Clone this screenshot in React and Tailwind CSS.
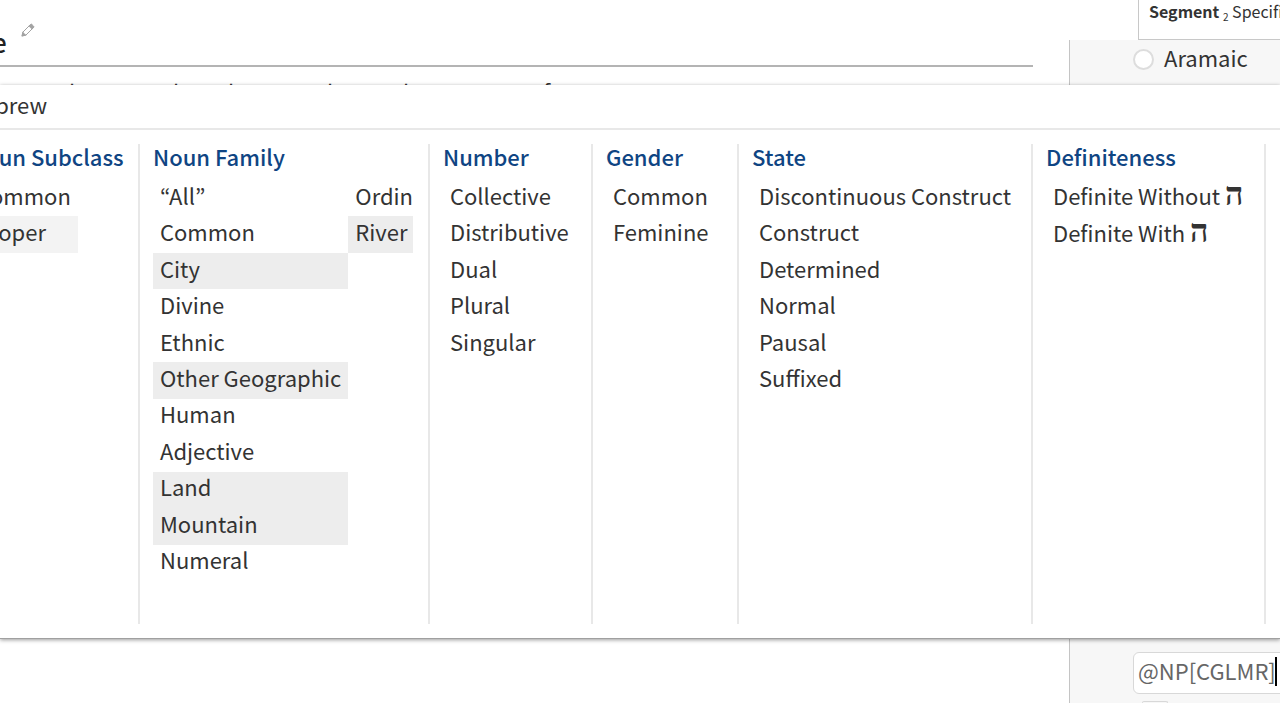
import React, { useState } from 'react';
import clsx from 'clsx';

const COLUMNS = [
    { title: 'Noun Subclass', width: 'w-[184px]', shade: 'bg-[#f3f3f3]', items: ['Common', 'Proper'] },
    {
        title: 'Noun Family',
        width: 'w-[290px]',
        shade: 'bg-[#ededed]',
        items: [
            '“All”', 'Common', 'City', 'Divine', 'Ethnic', 'Other Geographic', 'Human',
            'Adjective', 'Land', 'Mountain', 'Numeral', 'Ordinal', 'River',
        ],
    },
    { title: 'Number', width: 'w-[163px]', items: ['Collective', 'Distributive', 'Dual', 'Plural', 'Singular'] },
    { title: 'Gender', width: 'w-[146px]', items: ['Common', 'Feminine'] },
    {
        title: 'State',
        width: 'w-[294px]',
        items: ['Discontinuous Construct', 'Construct', 'Determined', 'Normal', 'Pausal', 'Suffixed'],
    },
    { title: 'Definiteness', width: 'w-[233px]', items: ['Definite Without ה', 'Definite With ה'] },
];

const INITIAL = [
    'Noun Subclass/Proper',
    'Noun Family/City',
    'Noun Family/Other Geographic',
    'Noun Family/Land',
    'Noun Family/Mountain',
    'Noun Family/River',
];

function ItemLabel({ text }) {
    if (!text.endsWith('ה')) return text;
    return (
        <>
            {text.slice(0, -1)}
            <span lang="he" className="font-['Liberation_Serif',serif] text-[32px] leading-none font-bold">ה</span>
        </>
    );
}

function Column({ column, selected, onToggle }) {
    return (
        <section className={clsx('shrink-0 border-r-2 border-[#e8e8e8] pr-[15px] pl-[13px]', column.width)}>
            <h2 className="h-9 text-[22px] leading-6 font-medium whitespace-nowrap text-[#0f4583]">{column.title}</h2>
            <div className="grid h-[401px] grid-flow-col grid-rows-11 justify-start overflow-hidden">
                {column.items.map((item) => {
                    const key = `${column.title}/${item}`;
                    return (
                        <button
                            key={key}
                            type="button"
                            aria-pressed={selected.includes(key)}
                            onClick={() => onToggle(key)}
                            className={clsx(
                                'flex min-h-0 items-center px-[7px] pb-[7px] text-left whitespace-pre',
                                selected.includes(key) && column.shade
                            )}
                        >
                            <span className="leading-8"><ItemLabel text={item} /></span>
                        </button>
                    );
                })}
            </div>
        </section>
    );
}

function MorphMenu() {
    const [selected, setSelected] = useState(INITIAL);

    const toggle = (key) => {
        setSelected((prev) => (prev.includes(key) ? prev.filter((k) => k !== key) : [...prev, key]));
    };

    return (
        <div className="absolute inset-x-0 top-[85px] z-10 overflow-hidden border-b border-[#a0a0a0] bg-white shadow-[0_1px_4px_rgba(0,0,0,0.4)]">
            <div className="-ml-[33px] flex h-[45px] items-center border-b-2 border-[#e8e8e8] pb-1">Hebrew</div>
            <div className="-ml-[44px] flex py-[14px]">
                <div className="flex h-[480px]">
                    {COLUMNS.map((column) => (
                        <Column key={column.title} column={column} selected={selected} onToggle={toggle} />
                    ))}
                </div>
            </div>
        </div>
    );
}

function PencilIcon() {
    return (
        <svg width="14" height="14" viewBox="0 0 14 14" fill="none" stroke="#a3a3a3" strokeLinejoin="round">
            <path d="M1 13l1-4 7.500-7.500a1 1 0 0 1 1.400 0l1.600 1.600a1 1 0 0 1 0 1.400L5 12z" />
            <path d="M7.500 3l3.500 3.500 2.300-2.500L10.200.8z" fill="#a3a3a3" stroke="none" />
            <path d="M.5 13.500l1-5 4 4z" fill="#a3a3a3" stroke="none" />
        </svg>
    );
}

export default function App() {
    const [search, setSearch] = useState('@NP[CGLMR]');

    return (
        <div className="relative flex h-screen overflow-hidden bg-white font-['Noto_Sans_CJK_KR','Noto_Sans',sans-serif] text-[22px] text-[#333333]">
            <main className="min-w-0 flex-1">
                <header className="mr-9 flex h-[67px] items-end border-b-2 border-[#b4b4b4] pb-[6px]">
                    <h1 className="-ml-2 text-[26px] leading-[34px] font-medium text-[#222222]">e</h1>
                    <button type="button" aria-label="Edit title" className="mb-[22px] ml-[14px]">
                        <PencilIcon />
                    </button>
                </header>
                <p className="flex h-10 gap-[50px] pt-[8px] pl-[69px] leading-8">
                    <span className="w-[54px]">h</span>
                    <span className="w-[5px]">h</span>
                    <span className="w-[49px]">h</span>
                    <span className="w-[26px]">h</span>
                    <span className="w-[90px]">h</span>
                    <span>f</span>
                </p>
            </main>

            <aside className="flex w-[211px] shrink-0 flex-col">
                <div className="flex h-10 shrink-0 justify-end">
                    <div className="w-[142px] overflow-hidden border-b border-l border-[#c8c8c8] pl-[10px] text-[16px] leading-[22px] whitespace-nowrap">
                        <b>Segment</b> <sub className="text-[10px]">2</sub> Specific
                    </div>
                </div>
                <div className="flex flex-1 flex-col overflow-hidden border-l border-[#c4c4c4] bg-[#f7f7f7] pl-[63px]">
                    <label className="flex h-[38px] items-center gap-[10px]">
                        <input
                            type="radio"
                            name="language"
                            className="size-[21px] appearance-none rounded-full border-2 border-[#dddddd] bg-white"
                        />
                        <span className="pb-1">Aramaic</span>
                    </label>
                    <div className="relative mt-auto h-[42px] shrink-0">
                        <input
                            type="text"
                            aria-label="Search"
                            value={search}
                            onChange={(e) => setSearch(e.target.value)}
                            className="h-full w-[170px] rounded-md border border-[#d8d8d8] bg-white px-1 pb-[7px] text-[#666666] outline-none"
                        />
                        <span className="absolute top-[5px] left-[142px] h-[29px] w-[2px] bg-black" />
                    </div>
                    <div className="mt-[7px] ml-[9px] h-[2px] w-[26px] shrink-0 rounded-t-md border border-b-0 border-[#d8d8d8]" />
                </div>
            </aside>
            <MorphMenu />
        </div>
    );
}
